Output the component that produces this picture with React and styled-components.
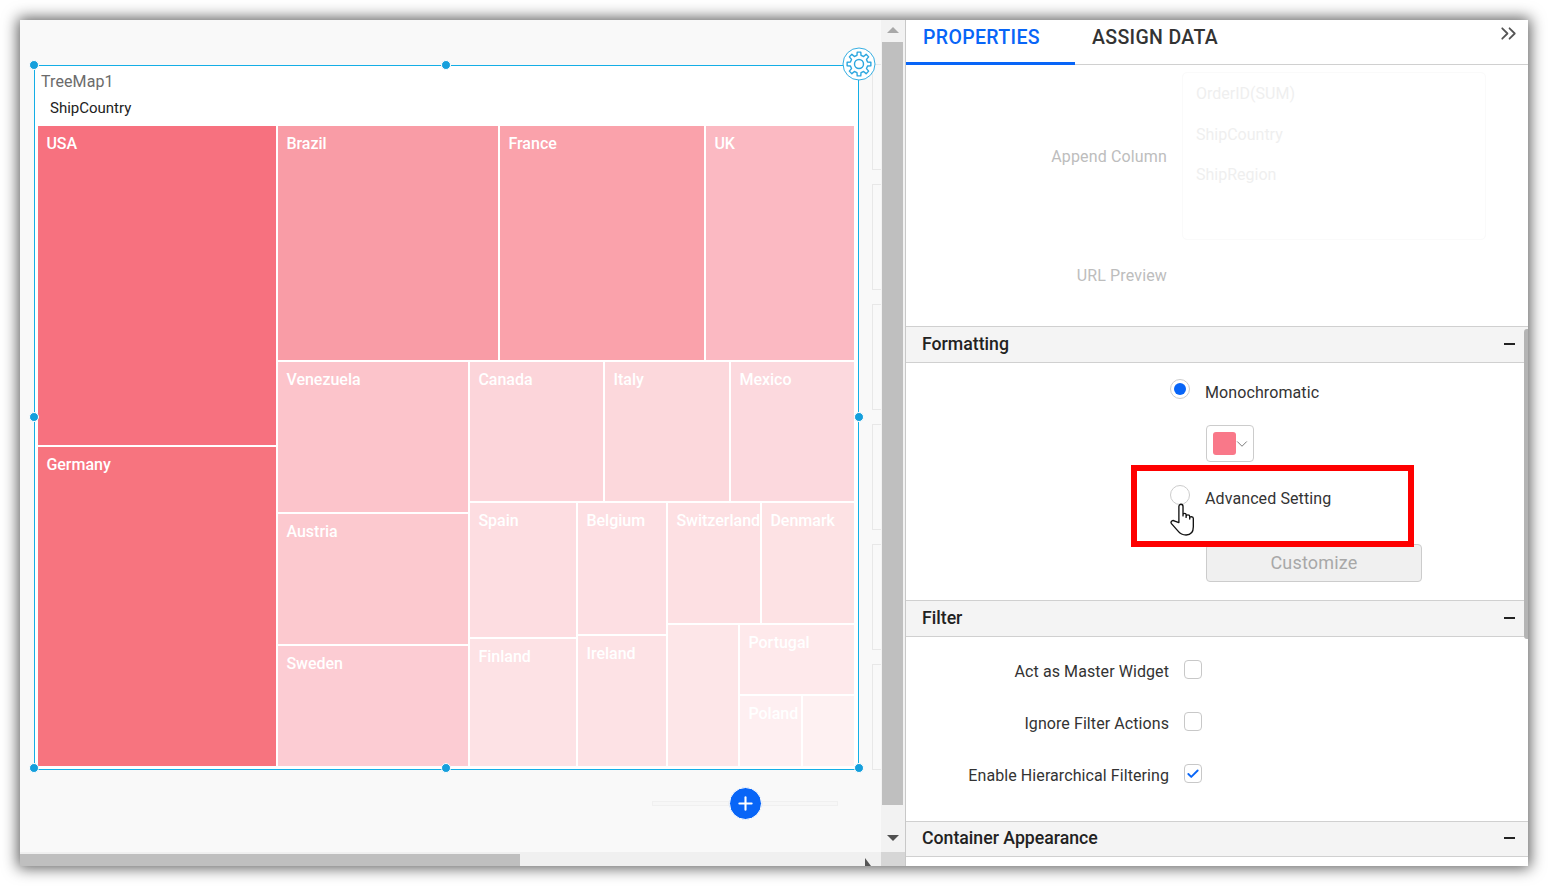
import React from 'react'
import styled, { createGlobalStyle } from 'styled-components'
import { Check, ChevronDown, ChevronsRight, Plus } from 'lucide-react'

const BLUE = '#0865f7'
const LINE = '#d0d0d0'

const GlobalStyle = createGlobalStyle`
  html, body { margin: 0; padding: 0; background: #fff; overflow: hidden; }
  body { font-family: Roboto, "Liberation Sans", sans-serif; }
  * { box-sizing: border-box; }
`

const Page = styled.div`
  width: 1548px;
  height: 886px;
  padding: 20px;
`

const Frame = styled.div`
  display: flex;
  width: 1508px;
  height: 846px;
  background: #fff;
  box-shadow: 0 0 14px 2px rgba(0, 0, 0, .65);
`

const LeftPane = styled.div`
  position: relative;
  display: flex;
  flex-direction: column;
  width: 886px;
  flex: none;
  border-right: 1px solid #c8c8c8;
`

const TopArea = styled.div`
  display: flex;
  height: 832px;
`

const Canvas = styled.div`
  width: 861px;
  flex: none;
  padding: 45px 0 0 14px;
  background: #f9f9f9;
  overflow: hidden;
`

const WidgetRow = styled.div`
  display: flex;
  gap: 13px;
  height: 705px;
`

const Widget = styled.div`
  position: relative;
  width: 825px;
  height: 705px;
  flex: none;
  padding: 0 3px;
  background: #fff;
  border: 1px solid #14aee6;
`

const Handle = styled.span`
  position: absolute;
  left: ${({ $left }) => $left};
  top: ${({ $top }) => $top};
  width: 10px;
  height: 10px;
  margin: -6px 0 0 -6px;
  border-radius: 50%;
  background: #159fdc;
  border: 1px solid #fff;
`

const GearBadge = styled.svg`
  position: absolute;
  right: -18px;
  top: -19px;
  width: 34px;
  height: 34px;
`

const WidgetHead = styled.div`
  height: 60px;
  padding: 6px 0 0 3px;
`

const WidgetTitle = styled.div`
  font-size: 16px;
  line-height: 19px;
  letter-spacing: .1px;
  color: #6b6b6b;
`

const WidgetField = styled.div`
  margin: 8px 0 0 9px;
  font-size: 15px;
  line-height: 18px;
  color: #222;
`

const TreeRow = styled.div`
  display: flex;
  gap: 2px;
  ${({ $h }) => ($h ? `height: ${$h}px; flex: none;` : 'flex: 1; min-height: 0;')}
`

const TreeCol = styled.div`
  display: flex;
  flex-direction: column;
  gap: 2px;
  ${({ $w }) => ($w ? `width: ${$w}px; flex: none;` : 'flex: 1; min-width: 0;')}
`

const TreeMap = styled(TreeRow)`
  width: 816px;
`

const Tile = styled.div`
  padding: 8px 0 0 8.4px;
  background: ${({ $fill }) => $fill};
  color: #fff;
  font-size: 16px;
  font-weight: 500;
  line-height: 19px;
  white-space: nowrap;
  ${({ $w }) => $w && `width: ${$w}px; flex: none;`}
  ${({ $h }) => $h && `height: ${$h}px; flex: none;`}
  ${({ $w, $h }) => !$w && !$h && 'flex: 1; min-width: 0; min-height: 0;'}
`

const GhostColumn = styled.div`
  display: flex;
  flex-direction: column;
  gap: 14px;
  width: 12px;
  flex: none;
  margin-top: -1px;
`

const GhostBox = styled.div`
  height: 106px;
  flex: none;
  border: 1px solid #e8e8e8;
  border-right: 0;
`

const AddRow = styled.div`
  display: flex;
  align-items: center;
  width: 186px;
  margin: 17px 0 0 618px;
`

const AddLine = styled.span`
  flex: 1;
  height: 5px;
  background: #f7f7f7;
  border: 1px solid #f0f0f0;
`

const AddButton = styled.button`
  display: flex;
  align-items: center;
  justify-content: center;
  width: 33px;
  height: 33px;
  padding: 0;
  color: #fff;
  background: ${BLUE};
  border: 1px solid #fff;
  border-radius: 50%;
`

const VScroll = styled.div`
  display: flex;
  flex-direction: column;
  align-items: center;
  width: 24px;
  flex: none;
  background: #f2f2f2;
`

const Arrow = styled.span`
  flex: none;
  width: 0;
  height: 0;
  margin: ${({ $margin }) => $margin};
  border-left: 6px solid transparent;
  border-right: 6px solid transparent;
  ${({ $down, $tone }) => ($down ? `border-top: 6px solid ${$tone};` : `border-bottom: 6px solid ${$tone};`)}
`

const VThumb = styled.div`
  width: 21px;
  height: 763px;
  flex: none;
  margin-right: 2px;
  background: #bfbfbf;
`

const BottomArea = styled.div`
  display: flex;
  height: 14px;
`

const HScroll = styled.div`
  position: relative;
  width: 861px;
  flex: none;
  padding-top: 2px;
  background: #f0f0f0;
`

const HThumb = styled.div`
  width: 500px;
  height: 12px;
  background: #bfbfbf;
`

const Grip = styled.span`
  position: absolute;
  left: 845px;
  top: 6px;
  width: 0;
  height: 0;
  border-bottom: 8px solid #555;
  border-right: 6px solid transparent;
`

const Corner = styled.div`
  flex: 1;
  background: #d6d6d6;
`

const Panel = styled.div`
  position: relative;
  flex: 1;
  min-width: 0;
  overflow: hidden;
`

const PanelThumb = styled.span`
  position: absolute;
  right: 0;
  top: 309px;
  width: 4px;
  height: 310px;
  background: #b4b4b4;
  border-radius: 3px 0 0 3px;
`

const Tabs = styled.div`
  display: flex;
  height: 45px;
  border-bottom: 1px solid ${LINE};
`

const Tab = styled.div`
  height: 45px;
  width: ${({ $w }) => $w}px;
  padding: 6.5px 0 0 17px;
  font-size: 19.5px;
  font-weight: 500;
  line-height: 22px;
  letter-spacing: .35px;
  color: ${({ $active }) => ($active ? BLUE : '#333')};
  border-bottom: 3px solid ${({ $active }) => ($active ? BLUE : 'transparent')};
`

const TabCollapse = styled.div`
  margin-left: auto;
  padding: 1px 7px 0 0;
  color: #555;
`

const FadedBlock = styled.div`
  height: 261px;
  padding-top: 7px;
`

const FadedRow = styled.div`
  display: flex;
  align-items: center;
  height: ${({ $h }) => $h}px;
  margin-bottom: ${({ $gap }) => $gap || 0}px;
`

const FadedLabel = styled.div`
  width: 261px;
  flex: none;
  text-align: right;
  font-size: 16px;
  letter-spacing: .15px;
  color: #bdbdbd;
`

const ColumnList = styled.div`
  width: 304px;
  height: 168px;
  margin-left: 15px;
  padding: 9px 0 0 13px;
  border: 1px solid #fafafa;
  border-radius: 5px;
`

const ColumnItem = styled.div`
  height: 40.5px;
  font-size: 16px;
  line-height: 24px;
  color: #efefef;
`

const SectionHead = styled.div`
  display: flex;
  align-items: center;
  justify-content: space-between;
  height: ${({ $h }) => $h || 37}px;
  padding: 0 13px 2px 16px;
  background: #f4f4f4;
  border-top: 1px solid ${LINE};
  border-bottom: 1px solid ${LINE};
  font-size: 17.7px;
  font-weight: 500;
  color: #222;
`

const Minus = styled.span`
  width: 11px;
  height: 2px;
  background: #222;
`

const FormatBody = styled.div`
  height: 237px;
  padding: 17px 0 0 264px;
`

const OptionRow = styled.div`
  position: relative;
  display: flex;
  align-items: flex-start;
  gap: 15px;
  height: 20px;
  margin-top: ${({ $top }) => $top || 0}px;
`

const Radio = styled.span`
  display: flex;
  align-items: center;
  justify-content: center;
  width: 20px;
  height: 20px;
  margin-top: -1px;
  flex: none;
  background: #fff;
  border: 1px solid #ccc;
  border-radius: 50%;
  &::after {
    content: '';
    display: ${({ $on }) => ($on ? 'block' : 'none')};
    width: 12px;
    height: 12px;
    border-radius: 50%;
    background: ${BLUE};
  }
`

const OptionLabel = styled.span`
  padding-top: 3px;
  font-size: 16px;
  line-height: 19px;
  letter-spacing: .1px;
  color: #333;
`

const HandCursor = styled.svg`
  position: absolute;
  left: 0;
  top: 17px;
  width: 25px;
  height: 33px;
`

const Swatch = styled.div`
  display: flex;
  align-items: center;
  width: 48px;
  height: 37px;
  margin: 25px 0 0 36px;
  padding-left: 6px;
  color: #777;
  background: #fff;
  border: 1px solid #ccc;
  border-radius: 4px;
  svg {
    flex: none;
    margin-left: -3px;
  }
`

const SwatchColor = styled.span`
  width: 23px;
  height: 23px;
  flex: none;
  border-radius: 3px;
  background: #f97889;
`

const CustomizeButton = styled.button`
  display: block;
  width: 216px;
  height: 38px;
  margin: 38px 0 0 36px;
  padding: 0 0 2px;
  font-family: inherit;
  font-size: 18px;
  letter-spacing: .2px;
  color: #a8a8a8;
  background: #f0f0f0;
  border: 1px solid #ccc;
  border-radius: 4px;
`

const FilterBody = styled.div`
  height: 184px;
  padding-top: 20px;
`

const CheckRow = styled.div`
  display: flex;
  align-items: center;
  height: 28px;
  margin-bottom: ${({ $gap }) => $gap || 0}px;
`

const CheckLabel = styled.span`
  width: 263px;
  flex: none;
  text-align: right;
  font-size: 16px;
  letter-spacing: .08px;
  color: #333;
`

const CheckBox = styled.span`
  display: flex;
  align-items: center;
  justify-content: center;
  width: 18px;
  height: 19px;
  margin: -3px 0 0 15px;
  color: ${BLUE};
  background: #fff;
  border: 1px solid #c8c8c8;
  border-radius: 4px;
`

// annotation drawn over the form
const Callout = styled.div`
  position: absolute;
  left: 225px;
  top: 445px;
  width: 283px;
  height: 82px;
  border: 6px solid #fe0000;
  pointer-events: none;
`

const gearPath = (teeth, outer, inner) => {
  const step = (Math.PI * 2) / teeth
  const pts = []
  for (let i = 0; i < teeth; i++) {
    const a = i * step - Math.PI / 2
    const at = (r, d) => `${(17 + r * Math.cos(a + d)).toFixed(2)} ${(17 + r * Math.sin(a + d)).toFixed(2)}`
    pts.push(at(inner, -step * 0.3), at(outer, -step * 0.19), at(outer, step * 0.19), at(inner, step * 0.3))
  }
  return `M${pts.join('L')}Z`
}

const Gear = () => (
  <GearBadge viewBox="0 0 34 34">
    <circle cx="17" cy="17" r="16" fill="#fff" stroke="#35aee2" strokeWidth="1" />
    <path d={gearPath(8, 12, 8.8)} fill="none" stroke="#2ba6df" strokeWidth="1.4" strokeLinejoin="round" />
    <circle cx="17" cy="17" r="4.5" fill="none" stroke="#2ba6df" strokeWidth="1.4" />
  </GearBadge>
)

const Hand = () => (
  <HandCursor viewBox="1 1 23 32">
    <path
      d="M9 20V4.5C9 1.5 13 1.5 13 4.5V13.5V12.5C13 10.6 16 10.6 16 12.5V15V14C16 12 19.5 12 19.5 14V16.5V15.6C19.5 13.8 23 13.8 23 16V24C23 29 20.5 32 16 32C12 32 10 30.5 8 28L1.8 21C0.4 19 3 17 5 18.6Z"
      fill="#fff"
      stroke="#111"
      strokeWidth="1.3"
      strokeLinejoin="round"
    />
  </HandCursor>
)

const handles = [
  ['0', '0'], ['50%', '0'],
  ['0', '50%'], ['calc(100% + 2px)', '50%'],
  ['0', '100%'], ['50%', '100%'], ['calc(100% + 2px)', '100%'],
]

const ghostBoxes = [0, 1, 2, 3, 4, 5]

const App = () => (
  <Page>
    <GlobalStyle />
    <Frame>
      <LeftPane>
        <TopArea>
          <Canvas>
            <WidgetRow>
              <Widget>
                <WidgetHead>
                  <WidgetTitle>TreeMap1</WidgetTitle>
                  <WidgetField>ShipCountry</WidgetField>
                </WidgetHead>
                <TreeMap $h={640}>
                  <TreeCol $w={238}>
                    <Tile $h={319} $fill="#f7717f">USA</Tile>
                    <Tile $fill="#f7747f">Germany</Tile>
                  </TreeCol>
                  <TreeCol>
                    <TreeRow $h={234}>
                      <Tile $w={220} $fill="#f99ca6">Brazil</Tile>
                      <Tile $w={204} $fill="#faa2ab">France</Tile>
                      <Tile $fill="#fbb9c2">UK</Tile>
                    </TreeRow>
                    <TreeRow>
                      <TreeCol $w={190}>
                        <Tile $h={150} $fill="#fcc4cb">Venezuela</Tile>
                        <Tile $h={130} $fill="#fcc9cf">Austria</Tile>
                        <Tile $fill="#fcccd3">Sweden</Tile>
                      </TreeCol>
                      <TreeCol>
                        <TreeRow $h={139}>
                          <Tile $w={133} $fill="#fcd5da">Canada</Tile>
                          <Tile $w={124} $fill="#fcd8dc">Italy</Tile>
                          <Tile $fill="#fcd9de">Mexico</Tile>
                        </TreeRow>
                        <TreeRow>
                          <TreeCol $w={106}>
                            <Tile $h={134} $fill="#fddde1">Spain</Tile>
                            <Tile $fill="#fde2e5">Finland</Tile>
                          </TreeCol>
                          <TreeCol $w={88}>
                            <Tile $h={131} $fill="#fddfe3">Belgium</Tile>
                            <Tile $fill="#fde2e5">Ireland</Tile>
                          </TreeCol>
                          <TreeCol>
                            <TreeRow $h={120}>
                              <Tile $w={92} $fill="#fde0e3">Switzerland</Tile>
                              <Tile $fill="#fde2e4">Denmark</Tile>
                            </TreeRow>
                            <TreeRow>
                              <Tile $w={70} $fill="#fde6e8" />
                              <TreeCol>
                                <Tile $h={69} $fill="#fee9eb">Portugal</Tile>
                                <TreeRow>
                                  <Tile $w={61} $fill="#feeff1">Poland</Tile>
                                  <Tile $fill="#fef1f2" />
                                </TreeRow>
                              </TreeCol>
                            </TreeRow>
                          </TreeCol>
                        </TreeRow>
                      </TreeCol>
                    </TreeRow>
                  </TreeCol>
                </TreeMap>
                {handles.map(([left, top]) => (
                  <Handle key={left + top} $left={left} $top={top} />
                ))}
                <Gear />
              </Widget>
              <GhostColumn>
                {ghostBoxes.map((box) => <GhostBox key={box} />)}
              </GhostColumn>
            </WidgetRow>
            <AddRow>
              <AddLine />
              <AddButton><Plus size={21} strokeWidth={2.4} /></AddButton>
              <AddLine />
            </AddRow>
          </Canvas>
          <VScroll>
            <Arrow $tone="#a8a8a8" $margin="7px 0 9px" />
            <VThumb />
            <Arrow $down $tone="#505050" $margin="30px 0 0" />
          </VScroll>
        </TopArea>
        <BottomArea>
          <HScroll>
            <HThumb />
            <Grip />
          </HScroll>
          <Corner />
        </BottomArea>
      </LeftPane>

      <Panel>
        <Tabs>
          <Tab $active $w={169}>PROPERTIES</Tab>
          <Tab $w={200}>ASSIGN DATA</Tab>
          <TabCollapse><ChevronsRight size={25} strokeWidth={1.7} /></TabCollapse>
        </Tabs>

        <FadedBlock>
          <FadedRow $h={168} $gap={15}>
            <FadedLabel>Append Column</FadedLabel>
            <ColumnList>
              <ColumnItem>OrderID(SUM)</ColumnItem>
              <ColumnItem>ShipCountry</ColumnItem>
              <ColumnItem>ShipRegion</ColumnItem>
            </ColumnList>
          </FadedRow>
          <FadedRow $h={40}>
            <FadedLabel>URL Preview</FadedLabel>
          </FadedRow>
        </FadedBlock>

        <SectionHead>Formatting<Minus /></SectionHead>
        <FormatBody>
          <OptionRow>
            <Radio $on />
            <OptionLabel>Monochromatic</OptionLabel>
          </OptionRow>
          <Swatch>
            <SwatchColor />
            <ChevronDown size={18} strokeWidth={1.3} />
          </Swatch>
          <OptionRow $top={24}>
            <Radio />
            <OptionLabel>Advanced Setting</OptionLabel>
            <Hand />
          </OptionRow>
          <CustomizeButton>Customize</CustomizeButton>
        </FormatBody>

        <SectionHead>Filter<Minus /></SectionHead>
        <FilterBody>
          <CheckRow $gap={24}>
            <CheckLabel>Act as Master Widget</CheckLabel>
            <CheckBox />
          </CheckRow>
          <CheckRow $gap={24}>
            <CheckLabel>Ignore Filter Actions</CheckLabel>
            <CheckBox />
          </CheckRow>
          <CheckRow>
            <CheckLabel>Enable Hierarchical Filtering</CheckLabel>
            <CheckBox><Check size={14} strokeWidth={3.2} /></CheckBox>
          </CheckRow>
        </FilterBody>

        <SectionHead $h={36}>Container Appearance<Minus /></SectionHead>

        <PanelThumb />
        <Callout />
      </Panel>
    </Frame>
  </Page>
)

export default App
